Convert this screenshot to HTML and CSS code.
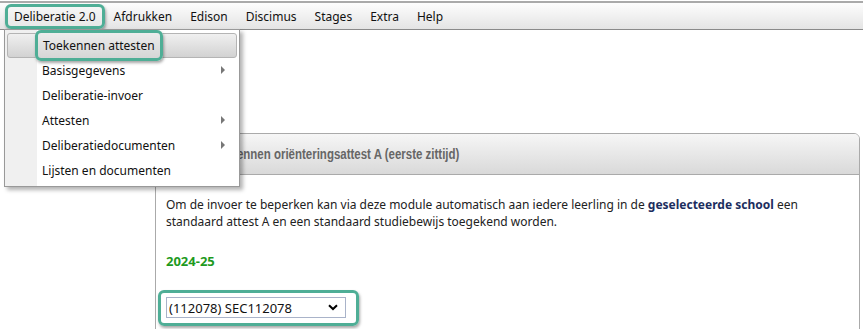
FILE: index.html
```html
<!DOCTYPE html>
<html>
	<head>
		<title>Deliberatie</title>
		<meta charset="utf-8"/>
		<link rel="stylesheet" href="styles.css">
	</head>
	<body>
		<div id="menubar">
			<span class="top mark">Deliberatie 2.0</span>
			<span class="top">Afdrukken</span>
			<span class="top">Edison</span>
			<span class="top">Discimus</span>
			<span class="top">Stages</span>
			<span class="top">Extra</span>
			<span class="top">Help</span>
		</div>

		<ul id="dropdown">
			<li class="hover"><span class="mark">Toekennen attesten</span></li>
			<li class="sub">Basisgegevens</li>
			<li>Deliberatie-invoer</li>
			<li class="sub">Attesten</li>
			<li class="sub">Deliberatiedocumenten</li>
			<li>Lijsten en documenten</li>
		</ul>

		<div id="panel">
			<div class="header"><span>Toekennen oriënteringsattest A (eerste zittijd)</span></div>
			<div class="content">
				<p>Om de invoer te beperken kan via deze module automatisch aan iedere leerling in de <b>geselecteerde school</b> een
				standaard attest A en een standaard studiebewijs toegekend worden.</p>
				<h2>2024-25</h2>
				<div class="mark pick">
					<div class="select">
						<select>
							<option>(112078) SEC112078</option>
						</select>
						<svg width="10" height="7" viewBox="0 0 10 7"><path d="M1 1.2 L5 5 L9 1.2" fill="none" stroke="#000" stroke-width="2"/></svg>
					</div>
				</div>
			</div>
		</div>
	</body>
</html>
```
FILE: styles.css
```css
body {
	margin: 0;
	padding-top: 1px;
	font-family: 'Noto Sans', 'Open Sans', sans-serif;
	font-size: 12px;
	color: #111;
	background: #fff;
	overflow: hidden;
}

.mark {
	border: 3px solid #4fae96;
	border-radius: 6px;
	box-shadow: 1px 2px 3px rgba(0, 0, 0, 0.35);
}

#menubar {
	height: 26px;
	border-top: 2px solid #aaa;
	border-bottom: 1px solid #8a8a8a;
	background: linear-gradient(#fdfdfd, #e4e4e4);
	padding-left: 5px;
	display: flex;
	align-items: center;
}

#menubar .top {
	padding: 0 9px;
	line-height: 19px;
}

#menubar .top.mark {
	padding: 0 6px;
	background: linear-gradient(#f6f6f6, #e8e8e8);
}

#dropdown {
	position: absolute;
	left: 4px;
	top: 29px;
	width: 234px;
	margin: 0;
	padding: 3px 0;
	list-style: none;
	background: linear-gradient(to right, #f0f0f0 32px, #fff 32px);
	border: 1px solid #999;
	box-shadow: 3px 3px 4px rgba(0, 0, 0, 0.3);
	z-index: 10;
}

#dropdown li {
	height: 25px;
	line-height: 25px;
	padding-left: 37px;
	position: relative;
}

#dropdown li.hover {
	margin: 0 2px;
	height: 23px;
	line-height: 23px;
	padding-left: 35px;
	border: 1px solid #b4b4b4;
	border-radius: 3px;
	background: linear-gradient(#f0f0f0, #d2d2d2);
}

#dropdown li.hover .mark {
	padding: 4px 5px 4px 5px;
	margin: 0 -8px;
	background: linear-gradient(#ececec, #d6d6d6);
}

#dropdown li.sub::after {
	content: '';
	position: absolute;
	right: 14px;
	top: 8px;
	border-left: 4px solid #777;
	border-top: 4px solid transparent;
	border-bottom: 4px solid transparent;
}

#panel {
	margin: 103px 0 0 155px;
	width: 703px;
	border: 1px solid #aaa;
	border-radius: 6px 6px 0 0;
}

#panel .header {
	height: 40px;
	line-height: 40px;
	padding-left: 55px;
	border-bottom: 1px solid #aaa;
	border-radius: 5px 5px 0 0;
	background: linear-gradient(#f6f6f6, #d9d9d9);
	font-family: 'Liberation Sans', Arial, sans-serif;
	font-weight: bold;
	font-size: 14px;
	color: #666;
}

#panel .header span {
	display: inline-block;
	transform: scaleX(0.82);
	transform-origin: left center;
}

#panel .content {
	padding: 21px 10px 40px 10px;
}

#panel p {
	margin: 0;
	line-height: 17px;
	color: #222;
}

#panel p b {
	color: #1c2e5e;
}

#panel h2 {
	margin: 22px 0 20px;
	font-size: 13px;
	color: #1e9a1e;
}

.pick {
	display: inline-block;
	padding: 4px 10px 5px 5px;
	margin-left: -8px;
}

.select {
	position: relative;
	width: 180px;
}

.select select {
	appearance: none;
	display: block;
	width: 100%;
	height: 21px;
	border: 1px solid #a9b3c9;
	background: #fff;
	font-family: 'Noto Sans', sans-serif;
	font-size: 13px;
	padding: 0 0 0 2px;
	color: #111;
}

.select svg {
	position: absolute;
	right: 8px;
	top: 7px;
}
```
